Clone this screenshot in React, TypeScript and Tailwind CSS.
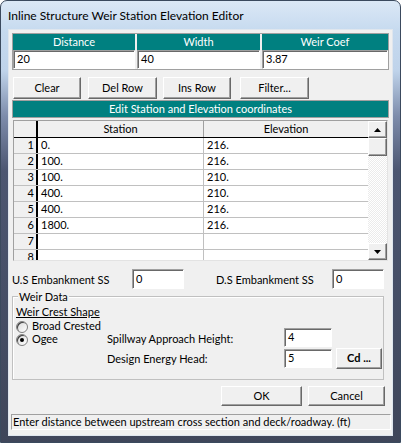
import React from "react";

const raised =
  "bg-[#f0f0f0] border border-t-white border-l-white border-r-[#696969] border-b-[#696969] shadow-[inset_-1px_-1px_0_#a0a0a0]";
const sunken =
  "bg-white border border-t-[#a0a0a0] border-l-[#a0a0a0] border-r-white border-b-white shadow-[inset_1px_1px_0_#696969]";

function Btn({ children, className }: { children: React.ReactNode; className: string }) {
  return <div className={`flex items-center justify-center ${raised} ${className}`}>{children}</div>;
}

function Field({ value, className }: { value: string; className: string }) {
  return (
    <div className={`flex items-center pl-[3px] ${sunken} ${className}`}>
      <span>{value}</span>
    </div>
  );
}

function Radio({ checked, label }: { checked: boolean; label: string }) {
  return (
    <div className="flex items-center h-[13px]">
      <div className="w-[12px] h-[12px] rounded-full border border-[#808080] bg-[linear-gradient(135deg,#d8d8d8,#ffffff)] flex items-center justify-center shadow-[inset_1px_1px_0_#404040]">
        {checked && <div className="w-[4px] h-[4px] rounded-full bg-black" />}
      </div>
      <span className="ml-[4px]">{label}</span>
    </div>
  );
}

const rows: [string, string][] = [
  ["0.", "216."],
  ["100.", "216."],
  ["100.", "210."],
  ["400.", "210."],
  ["400.", "216."],
  ["1800.", "216."],
  ["", ""],
  ["", ""],
];

function Arrow({ up }: { up: boolean }) {
  return (
    <svg width="7" height="4" viewBox="0 0 7 4">
      {up ? <polygon points="0,4 7,4 3.5,0" fill="#000" /> : <polygon points="0,0 7,0 3.5,4" fill="#000" />}
    </svg>
  );
}

export default function App() {
  return (
    <div className="w-[401px] h-[443px] overflow-hidden font-[Lato,sans-serif] text-[11px] text-black">
      <div className="w-[401px] h-[443px] rounded-t-[7px] border border-[#3b4a5e] bg-[linear-gradient(180deg,#dbe8f6_0px,#c6daef_30px,#bfd3ea_70px,#7d8cab_115px,#4c5671_170px,#3f465a_100%)] flex flex-col">
        <div className="h-[28px] pl-[7px] flex items-center text-[12px] text-black leading-none pt-[1px]">
          Inline Structure Weir Station Elevation Editor
        </div>
        <div className="ml-[7px] w-[385px] h-[407px] bg-[#f0f0f0] border border-[#dfe6ee] pl-[3px] flex flex-col">
          {/* top table */}
          <div className="mt-[3px] w-[377px] border border-[#a0a0a0] bg-[#f0f0f0] p-0 grid grid-cols-[122px_123px_126px] gap-x-[2px] gap-y-0">
            <div className="h-[16px] bg-[#008080] text-white flex items-center justify-center">Distance</div>
            <div className="h-[16px] bg-[#008080] text-white flex items-center justify-center">Width</div>
            <div className="h-[16px] bg-[#008080] text-white flex items-center justify-center">Weir Coef</div>
            <Field value="20" className="h-[19px]" />
            <Field value="40" className="h-[19px]" />
            <Field value="3.87" className="h-[19px]" />
          </div>

          {/* buttons */}
          <div className="mt-[7px] flex h-[22px]">
            <Btn className="ml-[1px] w-[68px] h-[22px]">Clear</Btn>
            <Btn className="ml-[7px] w-[69px] h-[22px]">Del Row</Btn>
            <Btn className="ml-[6px] w-[68px] h-[22px]">Ins Row</Btn>
            <Btn className="ml-[9px] w-[69px] h-[22px]">Filter...</Btn>
          </div>

          {/* teal bar */}
          <div className="mt-[1px] w-[377px] h-[18px] border border-[#a0a0a0] bg-[#008080] text-white flex items-center justify-center">
            Edit Station and Elevation coordinates
          </div>

          {/* grid */}
          <div className="mt-[2px] ml-[1px] w-[375px] h-[141px] border border-t-[#a0a0a0] border-l-[#a0a0a0] border-r-[#e3e3e3] border-b-[#e3e3e3] flex bg-white overflow-hidden">
            <div className="w-[354px] flex flex-col">
              <div className="h-[17px] flex shrink-0 border-b border-black bg-[#f0f0f0]">
                <div className="w-[24px] border-r-[2px] border-black" />
                <div className="w-[166px] border-r border-[#a0a0a0] flex items-center justify-center">Station</div>
                <div className="w-[164px] flex items-center justify-center">Elevation</div>
              </div>
              {rows.map((r, i) => (
                <div key={i} className="h-[16px] shrink-0 flex border-b border-[#c0c0c0]">
                  <div className="w-[24px] bg-[#f0f0f0] border-r-[2px] border-black flex items-center justify-end pr-[2px]">
                    {i + 1}
                  </div>
                  <div className="w-[166px] border-r border-[#c0c0c0] flex items-center pl-[3px]">{r[0]}</div>
                  <div className="w-[164px] flex items-center pl-[3px]">{r[1]}</div>
                </div>
              ))}
            </div>
            <div className="w-[19px] flex flex-col bg-[repeating-conic-gradient(#ffffff_0_25%,#ebebeb_0_50%)] bg-[length:2px_2px]">
              <div className={`h-[17px] flex items-center justify-center ${raised}`}>
                <Arrow up={true} />
              </div>
              <div className={`h-[18px] ${raised}`} />
              <div className="flex-1" />
              <div className={`h-[17px] flex items-center justify-center ${raised}`}>
                <Arrow up={false} />
              </div>
            </div>
          </div>

          {/* embankment */}
          <div className="mt-[8px] flex items-center h-[20px]">
            <div className="w-[120px] pt-[2px]">U.S Embankment SS</div>
            <Field value="0" className="w-[52px] h-[20px]" />
            <div className="ml-[32px] w-[116px] pt-[2px]">D.S Embankment SS</div>
            <Field value="0" className="w-[52px] h-[20px]" />
          </div>

          {/* group box */}
          <div className="mt-[7px] relative w-[372px] h-[84px] border border-[#c0c0c0] shadow-[inset_1px_1px_0_#ffffff] flex flex-col">
            <span className="absolute left-[5px] top-[-7px] px-[1px] bg-[#f0f0f0] leading-[13px]">Weir Data</span>
            <div className="pl-[3px] pt-[8px] leading-[13px]">
              <span className="underline">Weir Crest Shape</span>
            </div>
            <div className="flex">
              <div className="w-[94px] pl-[3px] pt-[2px] flex flex-col">
                <Radio checked={false} label="Broad Crested" />
                <Radio checked={true} label="Ogee" />
              </div>
              <div className="flex flex-col pt-[10px]">
                <div className="flex items-center h-[19px]">
                  <div className="w-[177px] pt-[3px]">Spillway Approach Height:</div>
                  <Field value="4" className="w-[48px] h-[19px]" />
                </div>
                <div className="flex items-center h-[21px] mt-[1px]">
                  <div className="w-[177px] pt-[2px]">Design Energy Head:</div>
                  <Field value="5" className="w-[48px] h-[19px]" />
                  <Btn className="ml-[4px] w-[46px] h-[21px] font-bold">Cd ...</Btn>
                </div>
              </div>
            </div>
          </div>

          {/* ok cancel */}
          <div className="mt-[6px] flex h-[20px]">
            <Btn className="ml-[209px] w-[81px] h-[20px]">OK</Btn>
            <Btn className="ml-[6px] w-[77px] h-[20px]">Cancel</Btn>
          </div>

          {/* status */}
          <div className="mt-[8px] -ml-[1px] w-[380px] h-[16px] border border-t-[#a0a0a0] border-l-[#a0a0a0] border-r-white border-b-white flex items-center pl-[1px] whitespace-nowrap overflow-hidden">
            Enter distance between upstream cross section and deck/roadway. (ft)
          </div>
        </div>
      </div>
    </div>
  );
}
